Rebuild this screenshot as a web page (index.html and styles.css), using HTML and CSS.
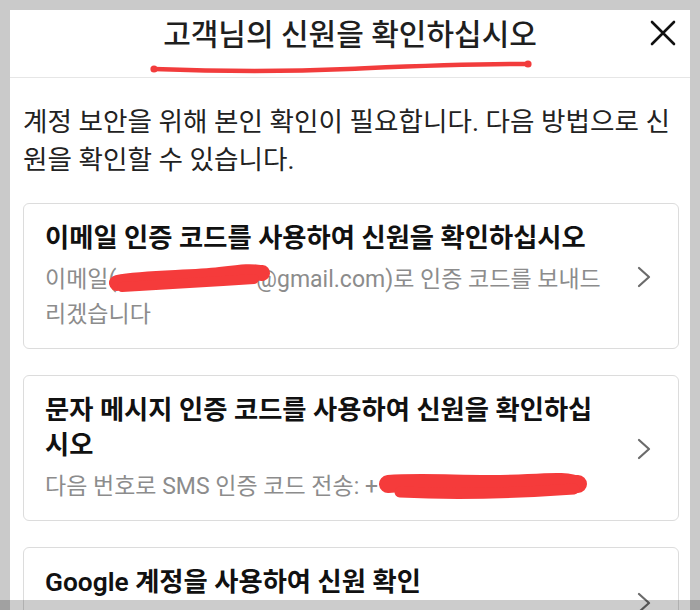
FILE: index.html
```html
<!DOCTYPE html>
<html lang="ko">
<head>
    <meta charset="UTF-8">
    <meta name="viewport" content="width=device-width, initial-scale=1.0">
    <title>신원 확인</title>
    <link rel="stylesheet" href="styles.css">
</head>
<body>

    <div class="sheet">
        <header class="sheet-head">
            <h1 class="sheet-title">고객님의 신원을 확인하십시오</h1>
            <svg class="title-mark" width="386" height="16" viewBox="0 0 386 16">
                <path d="M6 10 C 60 12, 130 13, 200 10 S 310 5, 380 5" fill="none" stroke="#f23c3c" stroke-width="4.5" stroke-linecap="round"/>
                <circle cx="6" cy="10" r="3.6" fill="#f23c3c"/>
                <circle cx="380" cy="5" r="3.6" fill="#f23c3c"/>
            </svg>
            <button type="button" class="close-btn" aria-label="닫기">
                <svg width="26" height="26" viewBox="0 0 26 26">
                    <path d="M2 2 L24 24 M24 2 L2 24" stroke="#111" stroke-width="2.6" stroke-linecap="round"/>
                </svg>
            </button>
        </header>

        <div class="sheet-body">
            <p class="intro">계정 보안을 위해 본인 확인이 필요합니다. 다음 방법으로 신원을 확인할 수 있습니다.</p>

            <a class="option" href="#">
                <div class="option-text">
                    <div class="option-title">이메일 인증 코드를 사용하여 신원을 확인하십시오</div>
                    <div class="option-desc">이메일(<span class="redact redact-mail"><svg class="blob" width="164" height="40" viewBox="0 0 164 40">
                        <path d="M9 25 C 40 19, 80 21, 112 17 S 142 14, 154 15" fill="none" stroke="#f53b3b" stroke-width="16" stroke-linecap="round"/>
                        <path d="M14 29 C 50 27, 100 24, 146 21" fill="none" stroke="#f53b3b" stroke-width="10" stroke-linecap="round"/>
                    </svg></span>@gmail.com)로 인증 코드를 보내드리겠습니다</div>
                </div>
                <span class="option-arrow">
                    <svg width="14" height="22" viewBox="0 0 14 22"><path d="M2 2 L12 11 L2 20" fill="none" stroke="#6b6b6b" stroke-width="2.2" stroke-linecap="round" stroke-linejoin="round"/></svg>
                </span>
            </a>

            <a class="option" href="#">
                <div class="option-text">
                    <div class="option-title">문자 메시지 인증 코드를 사용하여 신원을 확인하십시오</div>
                    <div class="option-desc">다음 번호로 SMS 인증 코드 전송: +<span class="redact redact-phone"><svg class="blob" width="212" height="40" viewBox="0 0 212 40">
                        <path d="M10 18 C 50 15, 100 20, 150 17 S 188 18, 200 18" fill="none" stroke="#f53b3b" stroke-width="18" stroke-linecap="round"/>
                        <path d="M22 26 C 80 29, 140 27, 196 23" fill="none" stroke="#f53b3b" stroke-width="11" stroke-linecap="round"/>
                    </svg></span></div>
                </div>
                <span class="option-arrow">
                    <svg width="14" height="22" viewBox="0 0 14 22"><path d="M2 2 L12 11 L2 20" fill="none" stroke="#6b6b6b" stroke-width="2.2" stroke-linecap="round" stroke-linejoin="round"/></svg>
                </span>
            </a>

            <a class="option" href="#">
                <div class="option-text">
                    <div class="option-title">Google 계정을 사용하여 신원 확인</div>
                    <div class="option-desc">Google 계정으로 로그인</div>
                </div>
                <span class="option-arrow">
                    <svg width="14" height="22" viewBox="0 0 14 22"><path d="M2 2 L12 11 L2 20" fill="none" stroke="#6b6b6b" stroke-width="2.2" stroke-linecap="round" stroke-linejoin="round"/></svg>
                </span>
            </a>
        </div>
    </div>

    <div class="dim-bar"></div>

</body>
</html>
```

FILE: styles.css
```css
* {
    box-sizing: border-box;
}

body {
    margin: 0;
    padding: 10px 10px 0;
    height: 100vh;
    overflow: hidden;
    background: #cacaca;
    font-family: Roboto, "Noto Sans CJK KR", sans-serif;
    color: #222;
}

.sheet {
    background: #fff;
    min-height: 100%;
}

/* header */
.sheet-head {
    position: relative;
    height: 68px;
    padding-top: 5px;
    border-bottom: 1px solid #e6e6e6;
}

.sheet-title {
    margin: 0;
    text-align: center;
    font-size: 30px;
    font-weight: 500;
    line-height: 40px;
    color: #1f1f1f;
}

.title-mark {
    position: absolute;
    left: 138px;
    top: 49px;
}

.close-btn {
    position: absolute;
    right: 14px;
    top: 9px;
    width: 27px;
    height: 27px;
    padding: 0;
    border: none;
    background: none;
    cursor: pointer;
    display: flex;
    align-items: center;
    justify-content: center;
}

/* body */
.sheet-body {
    padding: 25px 11px 0 13px;
}

.intro {
    margin: 0 0 24px;
    font-size: 26.6px;
    line-height: 38px;
    color: #222;
}

.option {
    display: flex;
    align-items: center;
    padding: 17px 0 16px 21px;
    margin-bottom: 26px;
    border: 1px solid #dcdcdc;
    border-radius: 6px;
    text-decoration: none;
    color: inherit;
}

.option-text {
    flex: 1;
    min-width: 0;
}

.option-title {
    font-size: 26.3px;
    font-weight: 600;
    line-height: 35px;
    color: #111;
}

.option-desc {
    margin-top: 6px;
    font-size: 23px;
    line-height: 35px;
    color: #8c8c8c;
}

/* hidden address / number, covered by a marker scribble */
.redact {
    display: inline-block;
    position: relative;
    height: 20px;
    vertical-align: middle;
}

.redact-mail {
    width: 140px;
}

.redact-phone {
    width: 200px;
}

.blob {
    position: absolute;
    left: -8px;
    top: -13px;
}

.redact-phone .blob {
    left: 0;
    top: -12px;
}

.option-arrow {
    width: 68px;
    flex-shrink: 0;
    display: flex;
    justify-content: center;
}

.dim-bar {
    position: fixed;
    left: 0;
    right: 0;
    bottom: 0;
    height: 10px;
    background: rgba(0, 0, 0, 0.2);
}
```
